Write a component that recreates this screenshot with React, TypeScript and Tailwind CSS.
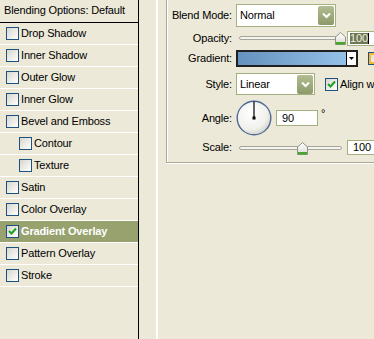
import React from 'react';

const font = "font-['Tahoma','Liberation_Sans',sans-serif] text-[11px] tracking-[-0.15px]";

function Check({ checked = false, hover = false }: { checked?: boolean; hover?: boolean }) {
  return (
    <div
      className={`w-[13px] h-[13px] shrink-0 border border-[#1c5180] bg-gradient-to-br from-[#d8d6cc] to-white flex items-center justify-center ${
        hover ? 'shadow-[inset_0_0_0_2px_#f8b636]' : ''
      }`}
    >
      {checked && (
        <svg width="9" height="9" viewBox="0 0 9 9">
          <path d="M1 4 L3.5 6.5 L8 1.5" stroke="#21a121" strokeWidth="2" fill="none" />
        </svg>
      )}
    </div>
  );
}

function DropButton() {
  return (
    <div className="w-[16px] h-[19px] shrink-0 bg-gradient-to-b from-[#b2bd92] to-[#8d9a68] rounded-[2px] flex items-center justify-center">
      <svg width="9" height="7" viewBox="0 0 9 7">
        <path d="M1 1.5 L4.5 5 L8 1.5" stroke="#fff" strokeWidth="2" fill="none" />
      </svg>
    </div>
  );
}

function Thumb() {
  return (
    <svg width="11" height="13" viewBox="0 0 11 13">
      <defs>
        <linearGradient id="tg" x1="0" y1="0" x2="0" y2="1">
          <stop offset="0" stopColor="#ffffff" />
          <stop offset="1" stopColor="#dcdcd4" />
        </linearGradient>
      </defs>
      <path d="M0.5 5 L5.5 0.5 L10.5 5 L10.5 12.5 L0.5 12.5 Z" fill="url(#tg)" stroke="#8f9086" />
      <rect x="1" y="10" width="9" height="2.5" fill="#4aa52c" />
    </svg>
  );
}

function Slider({ pos }: { pos: number }) {
  return (
    <div className="relative w-[110px] h-[14px] shrink-0">
      <div className="absolute left-[3px] top-[5px] w-[103px] h-[4px] rounded-full border border-[#a5a59a] bg-[#f4f3ee]" />
      <div className="absolute top-[1px]" style={{ left: pos }}>
        <Thumb />
      </div>
    </div>
  );
}

function Label({ children }: { children: React.ReactNode }) {
  return <div className="w-[65px] shrink-0 text-right mr-[4px]">{children}</div>;
}

const rows: { label: string; indent?: boolean; checked?: boolean }[] = [
  { label: 'Drop Shadow' },
  { label: 'Inner Shadow' },
  { label: 'Outer Glow' },
  { label: 'Inner Glow' },
  { label: 'Bevel and Emboss' },
  { label: 'Contour', indent: true },
  { label: 'Texture', indent: true },
  { label: 'Satin' },
  { label: 'Color Overlay' },
  { label: 'Gradient Overlay', checked: true },
  { label: 'Pattern Overlay' },
  { label: 'Stroke' },
];

export default function App() {
  return (
    <div className={`w-[374px] h-[339px] bg-[#ece9d8] flex overflow-hidden text-black ${font}`}>
      {/* Styles list */}
      <div className="w-[139px] h-full border-r border-black shrink-0">
        <div className="h-[23px] border-b border-black flex items-center pl-[4px] pb-[1px]">
          Blending Options: Default
        </div>
        {rows.map((r) => (
          <div
            key={r.label}
            className={`h-[22px] border-b border-white flex items-center gap-[2px] ${r.indent ? 'pl-[19px]' : 'pl-[6px]'} ${
              r.checked ? 'bg-[#97a26f] text-white font-bold' : ''
            }`}
          >
            <Check checked={r.checked} />
            <span>{r.label}</span>
          </div>
        ))}
      </div>

      <div className="w-[17px] shrink-0" />
      <div className="w-[2px] h-full border-l border-[#aca899] border-r border-white shrink-0" />
      <div className="w-[8px] shrink-0" />

      {/* Gradient overlay group */}
      <div className="self-start w-[230px] shrink-0 border-l border-b border-[#aca899] shadow-[inset_1px_0_0_#fff,0_1px_0_#fff] pt-[4px] pb-[7px]">
        {/* Blend mode */}
        <div className="flex items-center h-[23px]">
          <Label>Blend Mode:</Label>
          <div className="w-[100px] h-[23px] shrink-0 border border-[#a4b07f] bg-white flex items-center justify-between pl-[3px] pr-px">
            <span>Normal</span>
            <DropButton />
          </div>
        </div>

        {/* Opacity */}
        <div className="flex items-center h-[14px] mt-[4px]">
          <Label>Opacity:</Label>
          <Slider pos={99} />
          <div className="ml-px w-[40px] h-[15px] shrink-0 border border-[#a4b07f] bg-white flex items-center pl-[2px]">
            <span className="bg-[#6e7853] text-[#eef0e4] leading-[11px]">100</span>
            <span className="w-px h-[11px] bg-black" />
          </div>
        </div>

        {/* Gradient */}
        <div className="flex items-center h-[17px] mt-[5px]">
          <Label>Gradient:</Label>
          <div className="w-[122px] h-[17px] shrink-0 border-2 border-[#202020] flex">
            <div className="flex-1 bg-gradient-to-r from-[#6592be] to-[#94c1e8]" />
            <div className="w-[10px] bg-white border-l border-black flex items-center justify-center">
              <svg width="5" height="3" viewBox="0 0 5 3">
                <path d="M0 0 H5 L2.5 3 Z" fill="#000" />
              </svg>
            </div>
          </div>
          <div className="ml-[10px]">
            <Check hover />
          </div>
        </div>

        {/* Style */}
        <div className="flex items-center h-[22px] mt-[6px]">
          <Label>Style:</Label>
          <div className="w-[79px] h-[22px] shrink-0 border border-[#a4b07f] bg-white flex items-center justify-between pl-[3px] pr-px">
            <span>Linear</span>
            <DropButton />
          </div>
          <div className="ml-[10px] shrink-0 flex items-center gap-[2px] whitespace-nowrap">
            <Check checked />
            <span>Align wi</span>
          </div>
        </div>

        {/* Angle */}
        <div className="flex items-center h-[36px] mt-[5px]">
          <Label>Angle:</Label>
          <svg className="shrink-0" width="36" height="36" viewBox="0 0 36 36">
            <defs>
              <radialGradient id="dial" cx="0.4" cy="0.35" r="0.7">
                <stop offset="0" stopColor="#ffffff" />
                <stop offset="0.7" stopColor="#f0f0ec" />
                <stop offset="1" stopColor="#cfcfc8" />
              </radialGradient>
            </defs>
            <circle cx="18" cy="18" r="16.8" fill="url(#dial)" stroke="#4d6a96" strokeWidth="1.4" />
            <line x1="18" y1="18" x2="18" y2="1.5" stroke="#000" strokeWidth="1.2" />
            <rect x="16.5" y="16.5" width="3" height="3" fill="#000" />
          </svg>
          <div className="ml-[4px] w-[42px] h-[16px] shrink-0 border border-[#a4b07f] bg-white flex items-center pl-[5px]">
            90
          </div>
          <div className="ml-[3px] self-start mt-[8px] leading-none">°</div>
        </div>

        {/* Scale */}
        <div className="flex items-center h-[15px] mt-[4px]">
          <Label>Scale:</Label>
          <Slider pos={61} />
          <div className="ml-px w-[40px] h-[15px] shrink-0 border border-[#a4b07f] bg-white flex items-center pl-[5px]">
            100
          </div>
        </div>
      </div>
    </div>
  );
}
